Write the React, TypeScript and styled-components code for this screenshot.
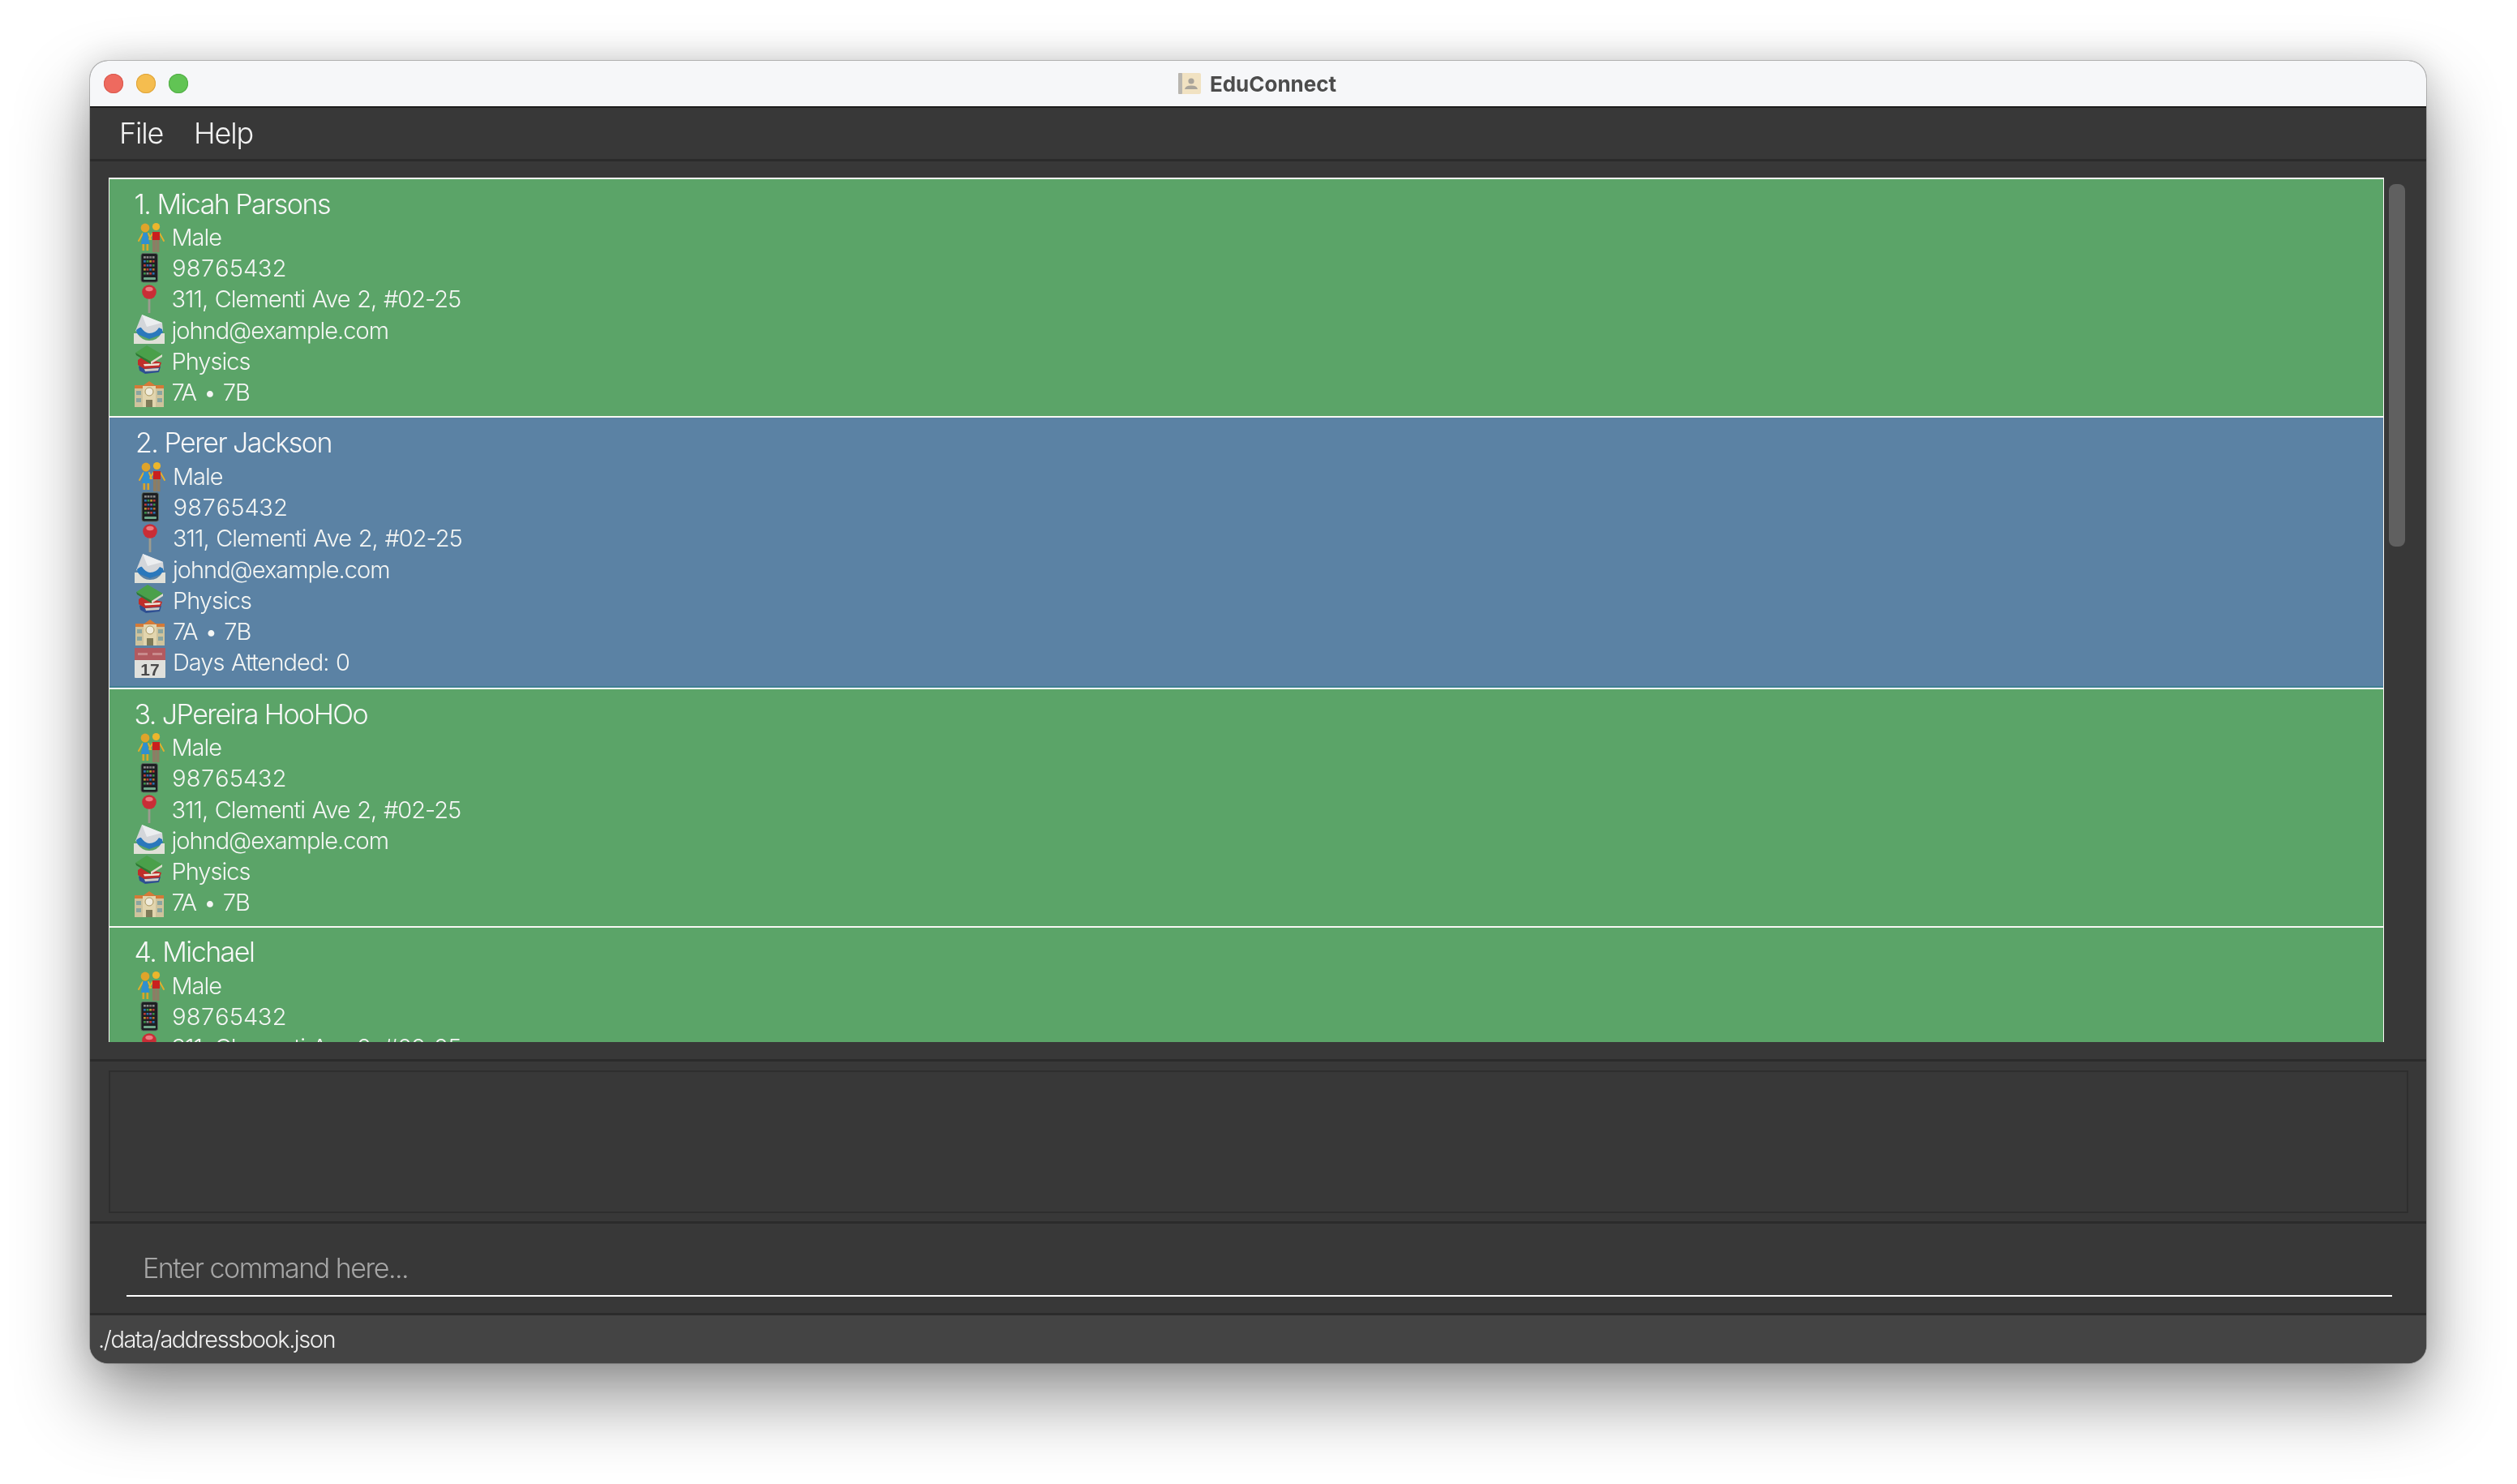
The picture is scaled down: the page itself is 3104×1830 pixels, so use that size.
import styled, { createGlobalStyle } from 'styled-components'

const GlobalStyle = createGlobalStyle`
  html, body {
    margin: 0;
    width: 3104px;
    height: 1830px;
    overflow: hidden;
    background: #fff;
    font-family: Inter, "Noto Sans", "Liberation Sans", sans-serif;
  }
`

const Page = styled.div`
  box-sizing: border-box;
  width: 3104px;
  height: 1830px;
  padding: 75px 112px 149px 111px;
  background: #fff;
`

const Window = styled.div`
  display: flex;
  flex-direction: column;
  height: 100%;
  border-radius: 22px;
  overflow: hidden;
  background: #383838;
  box-shadow: 0 0 0 1px rgba(0, 0, 0, 0.2), 0 44px 90px rgba(0, 0, 0, 0.42), 0 0 40px rgba(0, 0, 0, 0.14);
`

const TitleBar = styled.div`
  flex: none;
  box-sizing: border-box;
  height: 58px;
  display: grid;
  grid-template-columns: 1fr auto 1fr;
  align-items: center;
  padding: 0 19px 0 17px;
  background: #f6f7f9;
  border-bottom: 2px solid #1c1c1c;
`

const Lights = styled.div`
  display: flex;
  gap: 16px;
`

const Light = styled.span<{ $color: string; $edge: string }>`
  width: 24px;
  height: 24px;
  border-radius: 50%;
  background: ${(p) => p.$color};
  box-shadow: inset 0 0 0 1px ${(p) => p.$edge};
`

const Title = styled.div`
  display: flex;
  align-items: center;
  gap: 11px;
  font-size: 26px;
  font-weight: 700;
  color: #4c4c4c;
  filter: blur(0.4px);
`

const MenuBar = styled.div`
  flex: none;
  box-sizing: border-box;
  height: 66px;
  display: flex;
  align-items: center;
  gap: 38px;
  padding: 0 0 2px 36px;
  border-bottom: 3px solid #2b2b2b;
`

const MenuItem = styled.span`
  font-size: 36px;
  font-weight: 300;
  letter-spacing: -1.2px;
  color: #f2f2f2;
  filter: blur(0.5px);
`

const ListPane = styled.div`
  flex: 1;
  min-height: 0;
  display: flex;
  padding: 20px 26px 21px 23px;
`

const List = styled.div`
  flex: 1;
  min-width: 0;
  overflow: hidden;
`

const Scrollbar = styled.div`
  flex: none;
  width: 20px;
  margin-left: 6px;
  padding-top: 8px;
`

const ScrollThumb = styled.div`
  height: 447px;
  border-radius: 8px;
  background: #606060;
`

const Card = styled.div<{ $selected?: boolean }>`
  box-sizing: border-box;
  padding: ${(p) => (p.$selected ? '9.5px 0 12.3px 31px' : '8.5px 0 10.3px 29.5px')};
  border: solid #f8f8f4;
  border-width: 2px 1.5px 0;
  background: ${(p) => (p.$selected ? '#5b82a4' : '#5ba468')};
  box-shadow: ${(p) => (p.$selected ? 'inset 0 -2px 0 #3f7f92' : 'none')};
  color: #f4f6f4;
`

const Name = styled.div`
  height: 44px;
  line-height: 43px;
  margin-left: 1px;
  font-size: 34px;
  font-weight: 300;
  letter-spacing: -1.55px;
  color: #f8f8f8;
  filter: blur(0.5px);
`

const Row = styled.div`
  display: flex;
  align-items: center;
  gap: 9px;
  height: 38.2px;
`

const IconBox = styled.svg`
  flex: none;
  width: 38px;
  height: 38px;
  overflow: visible;
  filter: blur(0.7px);
`

const Detail = styled.span<{ $tabular?: boolean }>`
  font-size: 29px;
  font-weight: 300;
  font-feature-settings: ${(p) => (p.$tabular ? "'tnum'" : 'normal')};
  letter-spacing: ${(p) => (p.$tabular ? -1.1 : -1)}px;
  word-spacing: 1.5px;
  white-space: nowrap;
  filter: blur(0.5px);
`

const Divider = styled.div`
  flex: none;
  height: 3px;
  background: #2b2b2b;
`

const ResultPane = styled.div`
  flex: none;
  box-sizing: border-box;
  height: 197px;
  padding: 11px 22px 10px 23px;
`

const ResultBox = styled.div`
  box-sizing: border-box;
  height: 100%;
  border: 2px solid #2e2e2e;
`

const CommandPane = styled.div`
  flex: none;
  box-sizing: border-box;
  height: 113px;
  padding: 0 42px 20px 45px;
  display: flex;
  align-items: flex-end;
  border-bottom: 3px solid #2b2b2b;
`

const CommandInput = styled.input`
  flex: 1;
  box-sizing: border-box;
  height: 64px;
  padding: 0 20px 6px;
  border: 0;
  border-bottom: 2px solid #fff;
  outline: none;
  background: transparent;
  font: 300 34px Inter, "Noto Sans", sans-serif;
  letter-spacing: -1.5px;
  color: #fff;
  filter: blur(0.4px);
  &::placeholder {
    color: #a6a6a6;
    opacity: 1;
  }
`

const StatusBar = styled.div`
  flex: none;
  height: 59px;
  display: flex;
  align-items: center;
  padding-left: 10px;
  background: #444444;
  font-size: 29px;
  font-weight: 300;
  letter-spacing: -1.45px;
  color: #f0f0f0;
`

const StatusText = styled.span`
  filter: blur(0.5px);
`

const AppIcon = () => (
  <svg width="28" height="26" viewBox="0 0 28 26">
    <rect width="28" height="26" rx="2" fill="#f1e2c2" />
    <rect width="5" height="26" rx="1" fill="#b9b6b0" />
    <circle cx="16" cy="10" r="3.6" fill="#a9a49a" />
    <path d="M8 20c1-4 5-4.5 8-4.5s7 .5 8 4.5z" fill="#a9a49a" />
  </svg>
)

const CoupleIcon = () => (
  <IconBox viewBox="0 0 38 38">
    <path d="M11 14 6 23M18 14l3 7M23 14l-4 7M32 14l5 9" stroke="#e2ad2c" strokeWidth="2" fill="none" strokeLinecap="round" />
    <path d="M15.5 26h2.6v9h-2.6zM10.5 26h2.6v9h-2.6z" fill="#d9a52a" />
    <path d="M11.5 13h5l3.2 14H8.8z" fill="#2f8fd0" />
    <circle cx="14" cy="7" r="5.4" fill="#dfa42a" />
    <path d="M23 21h4v16h-4zM27.5 21h4v16h-4z" fill="#8d7d64" />
    <path d="M23 12h9v10h-9z" fill="#c9201e" />
    <circle cx="27.5" cy="5.5" r="4.6" fill="#ecb62c" />
  </IconBox>
)

const PhoneRow = ({ y, colors }: { y: number; colors: string[] }) => (
  <>
    {colors.map((c, i) => (
      <rect key={i} x={12 + i * 3.6} y={y} width="2.8" height="2.6" fill={c} />
    ))}
  </>
)

const PhoneIcon = () => (
  <IconBox viewBox="0 0 38 38">
    <rect x="9" y="0.5" width="20.5" height="35.5" rx="2.5" fill="#1d1f22" stroke="#5c6a60" strokeWidth="1" />
    <PhoneRow y={4} colors={['#8a8a8a', '#8a8a8a', '#777', '#8a8a8a']} />
    <PhoneRow y={9} colors={['#2e6fb0', '#3a8f4a', '#b89030', '#b83a3a']} />
    <PhoneRow y={14} colors={['#b83a3a', '#2e6fb0', '#8a4fa0', '#3a8f4a']} />
    <PhoneRow y={19} colors={['#b89030', '#b83a3a', '#2e6fb0', '#b87030']} />
    <PhoneRow y={24} colors={['#3a8f4a', '#888', '#b83a3a', '#2e6fb0']} />
    <rect x="12" y="30" width="15" height="3" rx="1" fill="#6fa88a" />
  </IconBox>
)

const PinIcon = () => (
  <IconBox viewBox="0 0 38 38">
    <rect x="17.6" y="14" width="2.8" height="22" fill="#9c9c90" />
    <circle cx="19" cy="10" r="8.8" fill="#c92d36" />
    <ellipse cx="19" cy="6.5" rx="4.6" ry="2.8" fill="#ec7a80" />
  </IconBox>
)

const EnvelopeIcon = () => (
  <IconBox viewBox="0 0 38 38">
    <path d="M2 20 10 0l25 10 1 10-16 7z" fill="#d3d6da" />
    <path d="M10 0l6 15 19-5z" fill="#eceef0" />
    <path d="M3 19q5-4 6-3 5 7 10 7 8 0 12-7l4 2 1 6-17 6-15-6z" fill="#2a78bc" />
    <path d="M0 23h4q6 9 15 9 10 0 15-9h4v13H0z" fill="#e0e0d8" />
  </IconBox>
)

const BooksIcon = () => (
  <IconBox viewBox="0 0 38 38">
    <path d="M6 26l4-3 23 3-2 7-17 2-7-4z" fill="#2e4f92" />
    <path d="M13 29l18-1-1 3-16 1z" fill="#cfcdc4" />
    <path d="M5 18l4-3 25 6-2 6-19 2-8-5z" fill="#bf2e2a" />
    <path d="M12 23l20-1-1 2.4-18 1z" fill="#ece6d8" />
    <path d="M2 9 16 0l19 11-14 9z" fill="#4aa04a" />
    <path d="M2 9l19 11v3L3 12z" fill="#2c7a32" />
    <path d="M21 20l14-9v3l-14 9z" fill="#dfdccf" />
  </IconBox>
)

const SchoolIcon = () => (
  <IconBox viewBox="0 0 38 38">
    <path d="M1 12h36v25H1z" fill="#cfc39c" />
    <path d="M1 10h11l7-5 7 5h11v4H1z" fill="#d47a38" />
    <path d="M11 11h16v26H11z" fill="#e2d5ae" />
    <circle cx="19" cy="18" r="5" fill="#f0ecdc" stroke="#a8955e" strokeWidth="1" />
    <path d="M15 28h8v9h-8z" fill="#7f7a58" />
    <path d="M3 17h6v5H3zM29 17h6v5h-6zM3 26h6v5H3zM29 26h6v5h-6z" fill="#8aa5a0" />
  </IconBox>
)

const CalendarIcon = () => (
  <IconBox viewBox="0 0 38 38">
    <rect y="1" width="38" height="37" rx="1" fill="#dfe0dc" />
    <path d="M0 1h38v15H0z" fill="#b25a60" />
    <path d="M4 7h12v3H4zM22 7h12v3H22z" fill="#c98a8c" />
    <text x="19" y="35" textAnchor="middle" fontFamily="Liberation Sans, sans-serif" fontWeight="700" fontSize="21" fill="#4a4a4a">
      17
    </text>
  </IconBox>
)

interface Student {
  name: string
  showDays?: boolean
}

const students: Student[] = [
  { name: '1. Micah Parsons' },
  { name: '2. Perer Jackson', showDays: true },
  { name: '3. JPereira HooHOo' },
  { name: '4. Michael' },
]

export default function App () {
  return (
    <Page>
      <GlobalStyle />
      <Window>
        <TitleBar>
          <Lights>
            <Light $color='#ee6a5f' $edge='#d9594e' />
            <Light $color='#f5bd4f' $edge='#dea43a' />
            <Light $color='#61c454' $edge='#52ad46' />
          </Lights>
          <Title>
            <AppIcon />
            EduConnect
          </Title>
        </TitleBar>
        <MenuBar>
          <MenuItem>File</MenuItem>
          <MenuItem>Help</MenuItem>
        </MenuBar>
        <ListPane>
          <List>
            {students.map((s) => (
              <Card key={s.name} $selected={s.showDays}>
                <Name>{s.name}</Name>
                <Row><CoupleIcon /><Detail>Male</Detail></Row>
                <Row><PhoneIcon /><Detail $tabular>98765432</Detail></Row>
                <Row><PinIcon /><Detail>311, Clementi Ave 2, #02-25</Detail></Row>
                <Row><EnvelopeIcon /><Detail>johnd@example.com</Detail></Row>
                <Row><BooksIcon /><Detail>Physics</Detail></Row>
                <Row><SchoolIcon /><Detail>7A • 7B</Detail></Row>
                {s.showDays && <Row><CalendarIcon /><Detail>Days Attended: 0</Detail></Row>}
              </Card>
            ))}
          </List>
          <Scrollbar>
            <ScrollThumb />
          </Scrollbar>
        </ListPane>
        <Divider />
        <ResultPane>
          <ResultBox />
        </ResultPane>
        <Divider />
        <CommandPane>
          <CommandInput placeholder='Enter command here...' />
        </CommandPane>
        <StatusBar>
          <StatusText>./data/addressbook.json</StatusText>
        </StatusBar>
      </Window>
    </Page>
  )
}
